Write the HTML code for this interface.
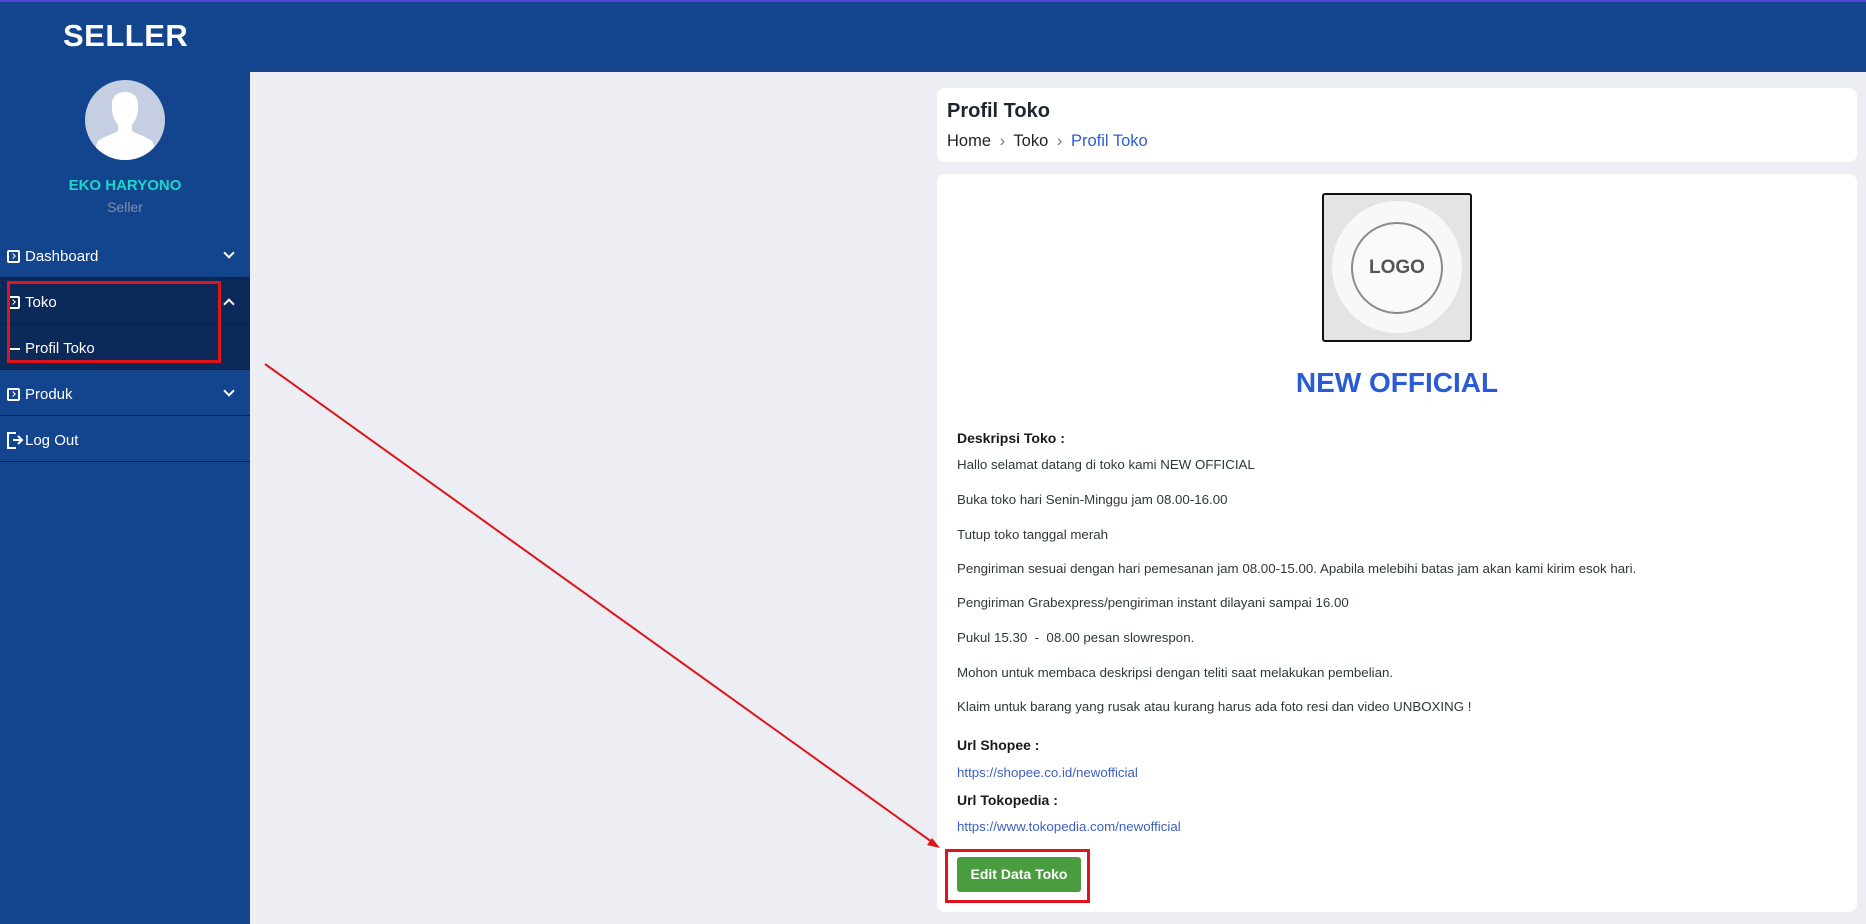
<!DOCTYPE html>
<html><head><meta charset="utf-8"><style>
*{margin:0;padding:0;box-sizing:border-box}
body{width:1866px;height:924px;position:relative;overflow:hidden;background:#eceef3;font-family:"Liberation Sans",sans-serif}
.top{position:absolute;left:0;top:0;width:1866px;height:72px;background:#13458f;border-top:2px solid #5a42d0}
.top h1{position:absolute;left:63px;top:16px;color:#fff;font-size:31px;font-weight:bold;letter-spacing:0.5px}
.side{position:absolute;left:0;top:72px;width:250px;height:852px;background:#13458f}
.av{position:absolute;left:85px;top:8px;width:80px;height:80px;border-radius:50%;background:#c5cfe1;overflow:hidden}
.name{position:absolute;left:0;width:250px;top:105px;text-align:center;color:#1ed6c8;font-weight:bold;font-size:15px}
.role{position:absolute;left:0;width:250px;top:127px;text-align:center;color:#7f8fa9;font-size:14px}
.row{position:absolute;left:0;width:250px;height:46px;border-bottom:1px solid #0a2147;color:#fff;font-size:15px}
.row span{position:absolute;left:25px;top:16px}
.ic{position:absolute;left:7px;top:18px;width:13px;height:13px;border:2px solid #fff;border-radius:2px}
.ic:after{content:"";position:absolute;left:2px;top:2px;width:3px;height:3px;border-right:1.5px solid #fff;border-top:1.5px solid #fff;transform:rotate(45deg)}
.chev{position:absolute;left:225px;top:17px;width:8px;height:8px;border-right:2px solid #fff;border-bottom:2px solid #fff;transform:rotate(45deg)}
.chev.up{top:22px;transform:rotate(-135deg)}
.card{position:absolute;left:937px;width:920px;background:#fff;border-radius:8px}
.t{position:absolute;left:957px;font-size:13.3px;color:#2f3a33}
.b{font-weight:bold;color:#1a1a1a;font-size:14px}
.l{color:#3d5fc0}
</style></head><body>
<div class="top"><h1>SELLER</h1></div>
<div class="side">
 <div class="av"><svg width="80" height="80"><path d="M40 12c-10 0-14 7-13 16 0 8 3 13 6 17v6c-4 3-14 5-20 10-2 3-3 10-3 19h60c0-9-1-16-3-19-6-5-16-7-20-10v-6c3-4 6-9 6-17 1-9-3-16-13-16z" fill="#fff"/></svg></div>
 <div class="name">EKO HARYONO</div>
 <div class="role">Seller</div>
 <div class="row" style="top:160px;height:46px"><div class="ic"></div><span>Dashboard</span><div class="chev"></div></div>
 <div class="row" style="top:206px;background:#0b2a5a"><div class="ic"></div><span>Toko</span><div class="chev up"></div></div>
 <div class="row" style="top:252px;background:#0b2a5a"><div style="position:absolute;left:10px;top:24px;width:10px;height:2px;background:#fff"></div><span>Profil Toko</span></div>
 <div class="row" style="top:298px"><div class="ic"></div><span>Produk</span><div class="chev"></div></div>
 <div class="row" style="top:344px"><svg style="position:absolute;left:5px;top:14px" width="20" height="20"><path d="M11 3H3v15h8M8 10h8M13 6l4 4-4 4" fill="none" stroke="#fff" stroke-width="2"/></svg><span>Log Out</span></div>
</div>
<div style="position:absolute;left:7px;top:281px;width:214px;height:82px;border:3px solid #e0141b"></div>
<div class="card" style="top:88px;height:74px">
 <div style="position:absolute;left:10px;top:12px;font-size:20px;font-weight:600;color:#1e2530">Profil Toko</div>
 <div style="position:absolute;left:10px;top:44px;font-size:16.5px;color:#222">Home <span style="color:#777;margin:0 4px">›</span> Toko <span style="color:#777;margin:0 4px">›</span> <span style="color:#2f5dcf">Profil Toko</span></div>
</div>
<div class="card" style="top:174px;height:738px"></div>
<div style="position:absolute;left:1322px;top:193px;width:150px;height:149px;border:2px solid #111;border-radius:3px;background:#e4e4e4">
 <div style="position:absolute;left:8px;top:6px;width:130px;height:132px;border-radius:50%;background:#f8f8f8"></div>
 <div style="position:absolute;left:27px;top:27px;width:92px;height:92px;border-radius:50%;border:2px solid #8a8a8a;background:#fafafa;text-align:center;line-height:88px;font-weight:bold;font-size:19px;color:#555">LOGO</div>
</div>
<div style="position:absolute;left:937px;width:920px;top:367px;text-align:center;font-size:28px;font-weight:bold;color:#2a5bd7">NEW OFFICIAL</div>
<div class="t b" style="top:430px">Deskripsi Toko :</div>
<div class="t" style="top:457px">Hallo selamat datang di toko kami NEW OFFICIAL</div>
<div class="t" style="top:492px">Buka toko hari Senin-Minggu jam 08.00-16.00</div>
<div class="t" style="top:527px">Tutup toko tanggal merah</div>
<div class="t" style="top:561px">Pengiriman sesuai dengan hari pemesanan jam 08.00-15.00. Apabila melebihi batas jam akan kami kirim esok hari.</div>
<div class="t" style="top:595px">Pengiriman Grabexpress/pengiriman instant dilayani sampai 16.00</div>
<div class="t" style="top:630px">Pukul 15.30 &nbsp;- &nbsp;08.00 pesan slowrespon.</div>
<div class="t" style="top:665px">Mohon untuk membaca deskripsi dengan teliti saat melakukan pembelian.</div>
<div class="t" style="top:699px">Klaim untuk barang yang rusak atau kurang harus ada foto resi dan video UNBOXING !</div>
<div class="t b" style="top:737px">Url Shopee :</div>
<div class="t l" style="top:765px">https://shopee.co.id/newofficial</div>
<div class="t b" style="top:792px">Url Tokopedia :</div>
<div class="t l" style="top:819px">https://www.tokopedia.com/newofficial</div>
<div style="position:absolute;left:957px;top:857px;width:124px;height:35px;background:#4a9d3e;border-radius:3px;color:#fff;font-size:14px;font-weight:bold;text-align:center;line-height:35px">Edit Data Toko</div>
<div style="position:absolute;left:945px;top:849px;width:145px;height:54px;border:3px solid #e0141b"></div>
<svg style="position:absolute;left:0;top:0" width="1866" height="924"><line x1="265" y1="364" x2="932" y2="842" stroke="#e0141b" stroke-width="2"/><path d="M940 848l-13-3 5-7z" fill="#e0141b"/></svg>
</body></html>
